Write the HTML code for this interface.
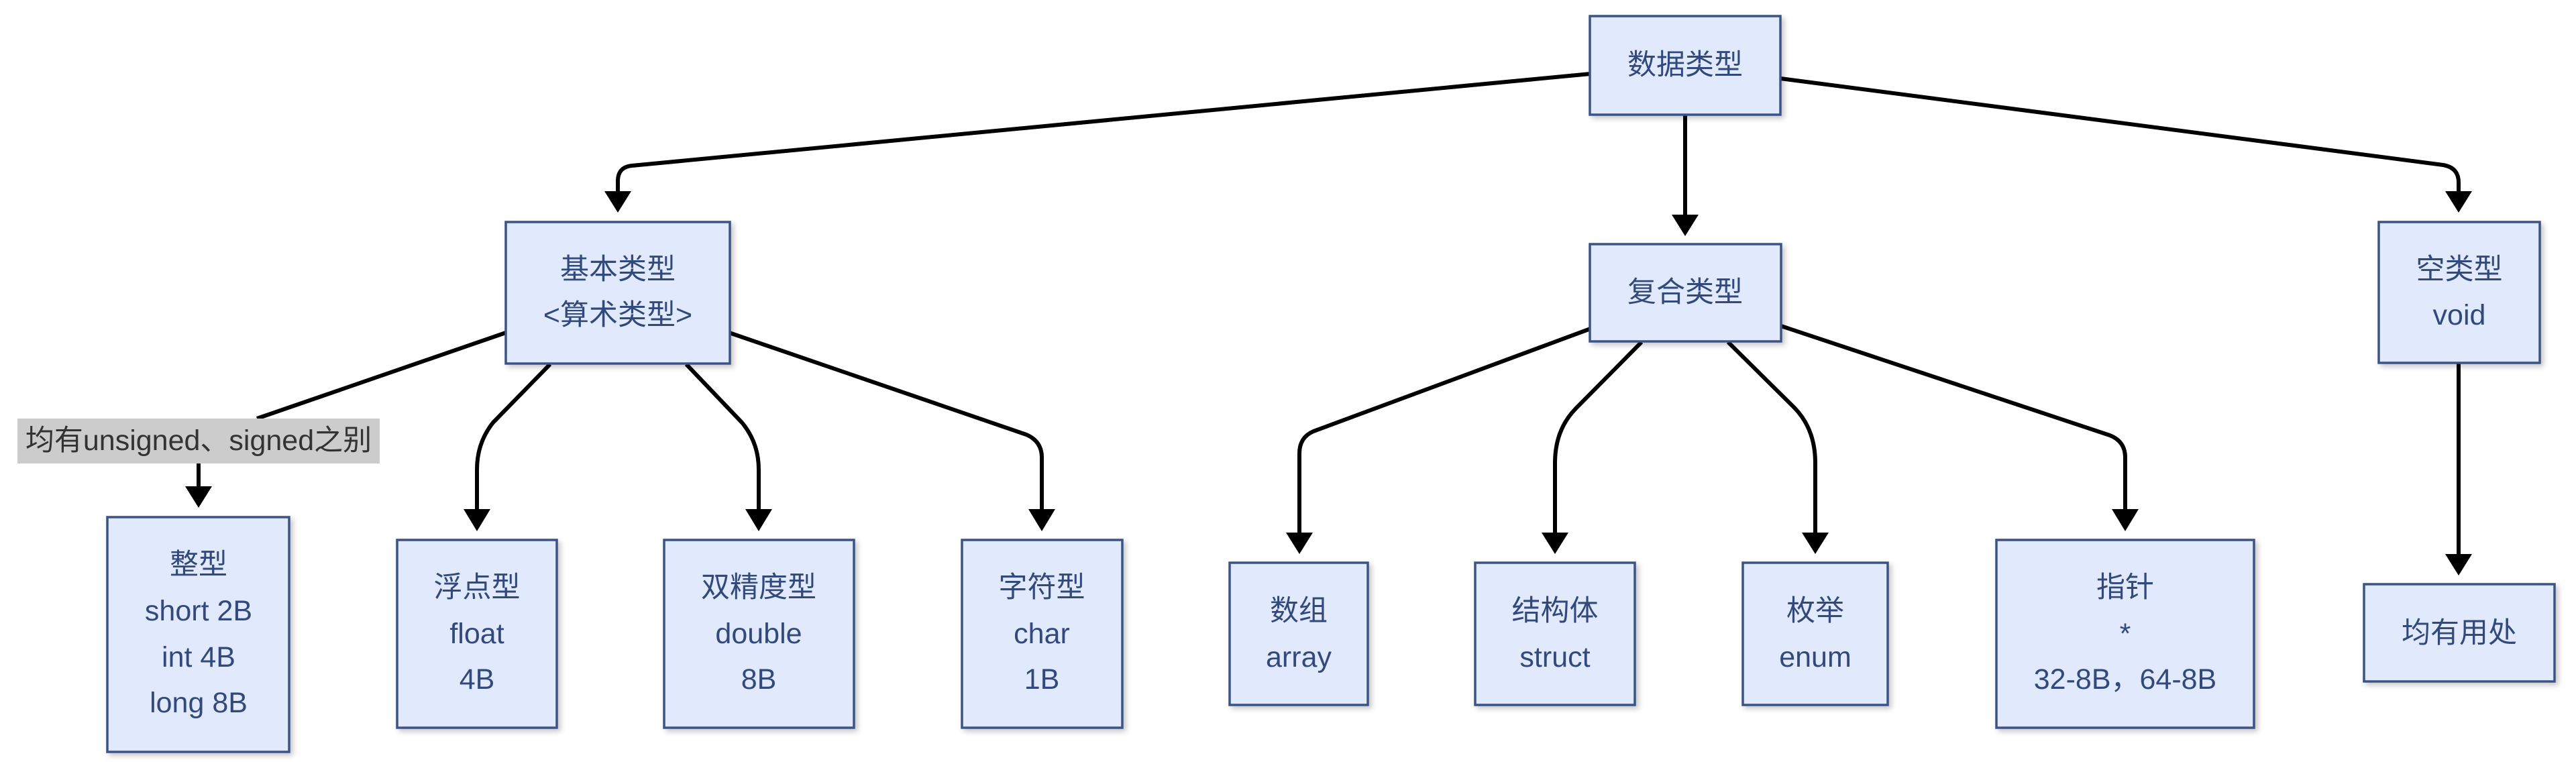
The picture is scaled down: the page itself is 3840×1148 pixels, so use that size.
<!DOCTYPE html>
<html><head><meta charset="utf-8"><style>
html,body{margin:0;padding:0;background:#fff;width:3840px;height:1148px;overflow:hidden}
svg text{font-family:"Liberation Sans","Noto Sans CJK SC",sans-serif;font-size:43px;fill:#34497b;text-anchor:middle;dominant-baseline:central}
</style></head><body>
<svg width="3840" height="1148" viewBox="0 0 3840 1148" xmlns="http://www.w3.org/2000/svg">
<defs>
<filter id="sh" x="-10%" y="-10%" width="130%" height="130%"><feDropShadow dx="4" dy="4" stdDeviation="4" flood-color="#000" flood-opacity="0.22"/></filter>
</defs>
<g fill="none" stroke="#000" stroke-width="6" stroke-linejoin="round">
<path d="M2371 110 L942 247 Q921 249 921 270 L921 290"/>
<path d="M2512 171 L2512 320"/>
<path d="M2654 117 L3642 246 Q3665 250 3665 272 L3665 290"/>
<path d="M754 496 L383 624"/>
<path d="M296 691 L296 730"/>
<path d="M820 543 L735 630 Q711 660 711 700 L711 762"/>
<path d="M1023 543 L1106 630 Q1131 660 1131 700 L1131 762"/>
<path d="M1087 496 L1530 648 Q1553 658 1553 682 L1553 762"/>
<path d="M2371 490 L1958 643 Q1937 652 1937 676 L1937 797"/>
<path d="M2447 510 L2350 608 Q2318 640 2318 690 L2318 797"/>
<path d="M2576 510 L2675 608 Q2706 640 2706 690 L2706 797"/>
<path d="M2652 485 L3145 649 Q3168 658 3168 682 L3168 762"/>
<path d="M3665 541 L3665 830"/>
</g>
<g fill="#000">
<path d="M901 285 L941 285 L921 317 Z"/>
<path d="M2492 320 L2532 320 L2512 352 Z"/>
<path d="M3645 285 L3685 285 L3665 317 Z"/>
<path d="M276 725 L316 725 L296 757 Z"/>
<path d="M691 759 L731 759 L711 792 Z"/>
<path d="M1111 759 L1151 759 L1131 792 Z"/>
<path d="M1533 759 L1573 759 L1553 792 Z"/>
<path d="M1917 794 L1957 794 L1937 826 Z"/>
<path d="M2298 794 L2338 794 L2318 826 Z"/>
<path d="M2686 794 L2726 794 L2706 826 Z"/>
<path d="M3148 759 L3188 759 L3168 792 Z"/>
<path d="M3645 826 L3685 826 L3665 858 Z"/>
</g>
<g fill="#e0eafc" stroke="#3b5385" stroke-width="3.5" filter="url(#sh)">
<rect x="2370" y="24" width="284" height="147"/>
<rect x="754" y="331" width="334" height="211"/>
<rect x="2370" y="364" width="285" height="145"/>
<rect x="3546" y="331" width="240" height="210"/>
<rect x="160" y="771" width="271" height="350"/>
<rect x="592" y="805" width="238" height="280"/>
<rect x="990" y="805" width="283" height="280"/>
<rect x="1434" y="805" width="239" height="280"/>
<rect x="1833" y="839" width="206" height="212"/>
<rect x="2199" y="839" width="238" height="212"/>
<rect x="2598" y="839" width="216" height="212"/>
<rect x="2976" y="805" width="384" height="280"/>
<rect x="3524" y="871" width="284" height="145"/>
</g>
<rect x="26" y="624" width="540" height="67" fill="#cccccc"/>
<text x="296" y="657" style="fill:#333">均有unsigned、signed之别</text>
<text x="2512" y="97">数据类型</text>
<text x="921" y="402">基本类型</text><text x="921" y="470">&lt;算术类型&gt;</text>
<text x="2512" y="436">复合类型</text>
<text x="3666" y="402">空类型</text><text x="3666" y="470">void</text>
<text x="296" y="842">整型</text><text x="296" y="911">short 2B</text><text x="296" y="980">int 4B</text><text x="296" y="1048">long 8B</text>
<text x="711" y="876">浮点型</text><text x="711" y="945">float</text><text x="711" y="1013">4B</text>
<text x="1131" y="876">双精度型</text><text x="1131" y="945">double</text><text x="1131" y="1013">8B</text>
<text x="1553" y="876">字符型</text><text x="1553" y="945">char</text><text x="1553" y="1013">1B</text>
<text x="1936" y="911">数组</text><text x="1936" y="980">array</text>
<text x="2318" y="911">结构体</text><text x="2318" y="980">struct</text>
<text x="2706" y="911">枚举</text><text x="2706" y="980">enum</text>
<text x="3168" y="876">指针</text><text x="3168" y="945">*</text><text x="3168" y="1013">32-8B，64-8B</text>
<text x="3666" y="944">均有用处</text>
</svg>
</body></html>
